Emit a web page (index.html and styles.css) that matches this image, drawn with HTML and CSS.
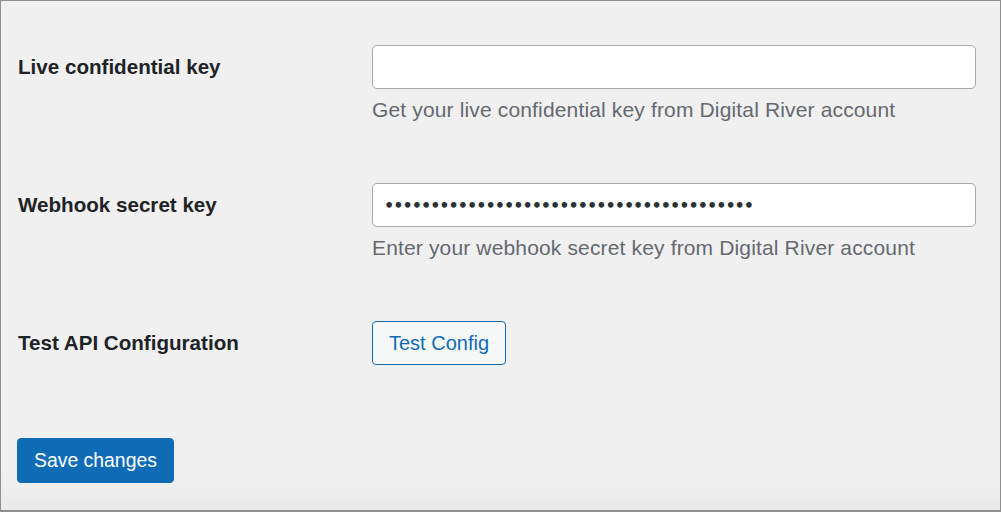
FILE: index.html
```html
<!DOCTYPE html>
<html>
<head>
<meta charset="utf-8">
<link rel="stylesheet" href="styles.css">
</head>
<body>
<div class="frame">
  <form class="settings">
    <div class="row">
      <label class="label" for="live">Live confidential key</label>
      <div class="field">
        <input class="text-input" id="live" type="text">
        <p class="desc">Get your live confidential key from Digital River account</p>
      </div>
    </div>
    <div class="row">
      <label class="label" for="hook">Webhook secret key</label>
      <div class="field">
        <input class="text-input" id="hook" type="password" value="••••••••••••••••••••••••••••••••••••••••">
        <p class="desc">Enter your webhook secret key from Digital River account</p>
      </div>
    </div>
    <div class="row">
      <span class="label">Test API Configuration</span>
      <div class="field">
        <button type="button" class="btn-secondary">Test Config</button>
      </div>
    </div>
    <div class="submit">
      <button type="button" class="btn-primary">Save changes</button>
    </div>
  </form>
</div>
</body>
</html>
```

FILE: styles.css
```css
* { box-sizing: border-box; }
html, body { margin: 0; padding: 0; }
body {
  font-family: "Liberation Sans", Arial, sans-serif;
  color: #1d2327;
}
.frame {
  width: 1001px;
  height: 512px;
  border: 1px solid #8f8f8f;
  border-bottom-width: 2px;
  background: linear-gradient(to bottom, #f0f0f0 0, #f0f0f0 475px, #e9e9e9 510px);
  padding: 44px 24px 0 17px;
}
.settings { display: flex; flex-direction: column; }
.row {
  display: grid;
  grid-template-columns: 354px 1fr;
  align-items: start;
  height: 138px;
}
.label {
  font-weight: bold;
  font-size: 20.6px;
  line-height: 44px;
  color: #1d2327;
}
.field { display: flex; flex-direction: column; align-items: flex-start; }
.text-input {
  width: 100%;
  height: 44px;
  border: 1px solid #a7a9ad;
  border-radius: 5px;
  background: #fff;
  padding: 0 11px;
  font-size: 16px;
  font-weight: bold;
  letter-spacing: -1px;
  color: #2c3338;
  font-family: "DejaVu Sans", sans-serif;
  outline: none;
}
.desc {
  margin: 9px 0 0;
  font-size: 21px;
  letter-spacing: 0.15px;
  line-height: 24px;
  color: #646970;
}
.btn-secondary {
  height: 44px;
  padding: 0 16px;
  border: 1px solid #0e6cb6;
  border-radius: 4px;
  background: #f6f7f7;
  color: #0e6cb6;
  font-family: inherit;
  font-size: 20px;
}
.submit { margin-top: -21px; margin-left: -1px; }
.btn-primary {
  height: 45px;
  padding: 0 16px;
  border: 1px solid #0e6cb6;
  border-radius: 4px;
  background: #0e6cb6;
  color: #fff;
  font-family: inherit;
  font-size: 19.4px;
}
```
